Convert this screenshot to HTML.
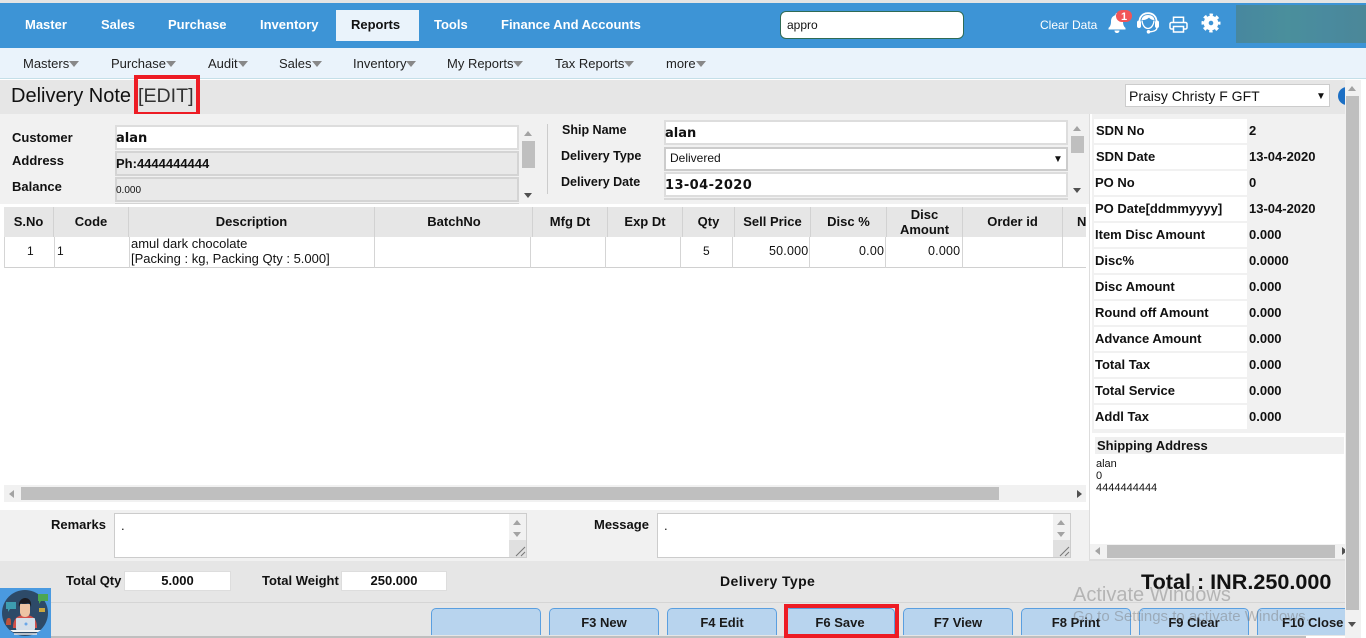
<!DOCTYPE html>
<html>
<head>
<meta charset="utf-8">
<style>
html,body{margin:0;padding:0;width:1366px;height:638px;overflow:hidden;background:#fff;font-family:"Liberation Sans",Arial,sans-serif;color:#111}
div,span{box-sizing:border-box}
.r{position:absolute}
.t{position:absolute;white-space:nowrap;line-height:16px;font-size:13px}
.b{font-weight:bold}
.c{text-align:center}
.n{color:#fff;font-weight:bold;top:17px}
.s{top:56px;color:#222}
.s i{display:inline-block;width:0;height:0;border-left:5px solid transparent;border-right:5px solid transparent;border-top:6px solid #888;margin-left:0;vertical-align:1px}
.th{position:absolute;top:207px;height:30px;background:#e6e6e6;border-right:1px solid #d2d2d2;font-weight:bold;font-size:13px;text-align:center;line-height:30px;white-space:nowrap;overflow:hidden}
.v{position:absolute;top:237px;height:31px;width:1px;background:#d5d5d5}
.lab{position:absolute;left:1094px;width:153px;height:24px;background:#fff;font-weight:bold;font-size:13px;line-height:24px;padding-left:1px;white-space:nowrap}
.val{position:absolute;left:1247px;width:97px;height:24px;background:#f1f1f1;font-weight:bold;font-size:13px;line-height:24px;padding-left:2px}
.btn{position:absolute;top:608px;width:110px;height:27px;background:#b8d4ee;border:1px solid #5a9fe0;border-bottom:0;border-radius:5px 5px 0 0;font-weight:bold;font-size:13px;text-align:center;line-height:28px;color:#1a1a1a}
.inp{position:absolute;background:#fff;border:2px solid #ddd}
.gr{position:absolute;background:#e9e9e9;border:2px solid #d4d4d4}
.up{position:absolute;width:0;height:0;border-left:4px solid transparent;border-right:4px solid transparent;border-bottom:5px solid #a3a3a3}
.dn{position:absolute;width:0;height:0;border-left:4px solid transparent;border-right:4px solid transparent;border-top:5px solid #505050}
.lf{position:absolute;width:0;height:0;border-top:4px solid transparent;border-bottom:4px solid transparent;border-right:5px solid #a3a3a3}
.rt{position:absolute;width:0;height:0;border-top:4px solid transparent;border-bottom:4px solid transparent;border-left:5px solid #505050}
.th2{background:#bfbfbf;position:absolute}
.ink{font-family:"DejaVu Sans",sans-serif;font-weight:bold;font-size:13px}
</style>
</head>
<body>
<!-- top nav -->
<div class="r" style="left:0;top:0;width:1366px;height:3px;background:#e4e4e4"></div>
<div class="r" style="left:0;top:3px;width:1366px;height:45px;background:#3d94d6"></div>
<div class="r" style="left:336px;top:10px;width:83px;height:31px;background:#eaf3fb"></div>
<span class="t n" style="left:25px">Master</span>
<span class="t n" style="left:101px">Sales</span>
<span class="t n" style="left:168px">Purchase</span>
<span class="t n" style="left:260px">Inventory</span>
<span class="t b" style="left:351px;top:17px;color:#111">Reports</span>
<span class="t n" style="left:434px">Tools</span>
<span class="t n" style="left:501px">Finance And Accounts</span>
<div class="r" style="left:780px;top:11px;width:184px;height:28px;background:#fff;border:1px solid #2f6b55;border-radius:6px"></div>
<span class="t" style="left:787px;top:17px;font-size:12px">appro</span>
<span class="t" style="left:1040px;top:17px;color:#fff;font-size:12px">Clear Data</span>
<svg class="r" style="left:1105px;top:8px" width="30" height="26" viewBox="0 0 30 26">
<path d="M12 5c-.9 0-1.500.7-1.500 1.500v.6C7.300 8 6 10.500 6 13.500c0 3.500-1 5-2.500 6.500v1.500h17V20C19 18.500 18 17 18 13.500c0-3-1.300-5.500-4.500-6.400v-.6C13.500 5.700 12.900 5 12 5zM9.500 22.500c0 1.500 1.100 2.500 2.500 2.500s2.500-1 2.500-2.500z" fill="#fff"/>
<rect x="11" y="2" width="16" height="12" rx="6" fill="#f25557"/>
<text x="19" y="12" font-size="11" font-weight="bold" fill="#fff" text-anchor="middle" font-family="Liberation Sans">1</text>
</svg>
<svg class="r" style="left:1136px;top:12px" width="24" height="23" viewBox="0 0 24 23" fill="none" stroke="#fff">
<path d="M3.500 12V9.500C3.500 4.500 7 1.200 12 1.200s8.500 3.300 8.500 8.300V12" stroke-width="1.800"/>
<path d="M5.500 8C6 4.500 8.500 3 12 3s6 1.500 6.500 5c-2 .3-4-.6-5.500-2.500C11.500 7.300 8.500 8.300 5.500 8z" fill="#fff" stroke="none"/>
<path d="M6 8.500c.3 4.500 2.800 8 6 8s5.700-3.500 6-8" stroke-width="1.300"/>
<rect x="1" y="8.500" width="4" height="7.500" rx="2" fill="#fff" stroke="none"/>
<rect x="19" y="8.500" width="4" height="7.500" rx="2" fill="#fff" stroke="none"/>
<path d="M21 15.500c0 2.800-3 4-7 4.300" stroke-width="1.300"/>
<circle cx="12.500" cy="19.800" r="1.800" fill="#fff" stroke="none"/>
</svg>
<svg class="r" style="left:1169px;top:16px" width="19" height="17" viewBox="0 0 19 17" fill="none" stroke="#fff" stroke-width="1.500">
<path d="M4.500 6.500V1.200h10v5.300"/>
<path d="M4 13H2.500A1.500 1.500 0 0 1 1 11.500V8a1.500 1.500 0 0 1 1.500-1.500h14A1.500 1.500 0 0 1 18 8v3.500a1.500 1.500 0 0 1-1.500 1.500H15"/>
<path d="M4.500 10.500h10v5.500h-10z"/>
</svg>
<svg class="r" style="left:1200px;top:12px" width="22" height="22" viewBox="0 0 22 22" fill="none" stroke="#fff">
<circle cx="11" cy="11" r="4.800" stroke-width="5"/>
<circle cx="11" cy="11" r="8.200" stroke-width="2.600" stroke-dasharray="3.400 3.040" stroke-dashoffset="1.700"/>
</svg>
<div class="r" style="left:1236px;top:5px;width:130px;height:38px;background:linear-gradient(90deg,#47879f,#4a8f9c 40%,#4a8a9e 70%,#4b8798)"></div>

<!-- sub nav -->
<div class="r" style="left:0;top:48px;width:1366px;height:30px;background:#eaf3fb"></div>
<div class="r" style="left:0;top:78px;width:1366px;height:1px;background:#c5dfe8"></div>
<span class="t s" style="left:23px">Masters<i></i></span>
<span class="t s" style="left:111px">Purchase<i></i></span>
<span class="t s" style="left:208px">Audit<i></i></span>
<span class="t s" style="left:279px">Sales<i></i></span>
<span class="t s" style="left:353px">Inventory<i></i></span>
<span class="t s" style="left:447px">My Reports<i></i></span>
<span class="t s" style="left:555px">Tax Reports<i></i></span>
<span class="t s" style="left:666px">more<i></i></span>

<!-- title bar -->
<div class="r" style="left:0;top:80px;width:1345px;height:34px;background:#e6e6e6"></div>
<span class="t" style="left:11px;top:84px;font-size:20px;line-height:24px">Delivery Note</span>
<span class="t" style="left:138px;top:84px;font-size:19.600px;line-height:24px;color:#333">[EDIT]</span>
<div class="r" style="left:134px;top:75px;width:66px;height:41px;border:4px solid #ed1c24"></div>
<div class="r" style="left:1125px;top:84px;width:205px;height:23px;background:#fff;border:1px solid #ccc"></div>
<span class="t" style="left:1129px;top:88px;font-size:14px">Praisy Christy F GFT</span>
<span class="t" style="left:1316px;top:89px;font-size:10px">&#9660;</span>
<div class="r" style="left:1338px;top:87px;width:18px;height:18px;border-radius:50%;background:#1c6fc4"></div>

<!-- customer panel -->
<div class="r" style="left:0;top:114px;width:1089px;height:90px;background:#f1f1f1"></div>
<span class="t b" style="left:12px;top:130px">Customer</span>
<span class="t b" style="left:12px;top:153px">Address</span>
<span class="t b" style="left:12px;top:179px">Balance</span>
<div class="inp" style="left:115px;top:125px;width:404px;height:25px"></div>
<span class="t ink" style="left:116px;top:131px">alan</span>
<div class="gr" style="left:115px;top:151px;width:404px;height:25px"></div>
<span class="t b" style="left:116px;top:156px">Ph:4444444444</span>
<div class="gr" style="left:115px;top:177px;width:404px;height:25px"></div>
<span class="t" style="left:116px;top:183px;font-size:10px">0.000</span>
<div class="r" style="left:115px;top:203px;width:404px;height:1px;background:#d4d4d4"></div>
<div class="up" style="left:524px;top:131px"></div>
<div class="th2" style="left:522px;top:141px;width:13px;height:27px"></div>
<div class="dn" style="left:524px;top:193px"></div>
<div class="r" style="left:547px;top:124px;width:1px;height:70px;background:#ccc"></div>
<span class="t b" style="left:562px;top:122px;font-size:12.500px">Ship Name</span>
<span class="t b" style="left:561px;top:148px;font-size:12.500px">Delivery Type</span>
<span class="t b" style="left:561px;top:174px;font-size:12.500px">Delivery Date</span>
<div class="inp" style="left:664px;top:120px;width:404px;height:25px"></div>
<span class="t ink" style="left:665px;top:126px">alan</span>
<div class="r" style="left:664px;top:147px;width:404px;height:24px;background:#fff;border:2px solid #ccc"></div>
<span class="t" style="left:670px;top:150px;font-size:12px">Delivered</span>
<span class="t" style="left:1053px;top:152px;font-size:10px">&#9660;</span>
<div class="inp" style="left:664px;top:172px;width:404px;height:25px"></div>
<span class="t ink" style="left:665px;top:178px;letter-spacing:.4px">13-04-2020</span>
<div class="r" style="left:664px;top:198px;width:404px;height:2px;background:#d8d8d8"></div>
<div class="up" style="left:1073px;top:126px"></div>
<div class="th2" style="left:1071px;top:136px;width:13px;height:17px"></div>
<div class="dn" style="left:1073px;top:188px"></div>

<!-- table -->
<div class="th" style="left:4px;width:50px">S.No</div>
<div class="th" style="left:54px;width:75px;font-weight:bold">Code</div>
<div class="th" style="left:129px;width:246px">Description</div>
<div class="th" style="left:375px;width:158px;padding-left:1px">BatchNo</div>
<div class="th" style="left:533px;width:75px">Mfg Dt</div>
<div class="th" style="left:608px;width:75px">Exp Dt</div>
<div class="th" style="left:683px;width:52px">Qty</div>
<div class="th" style="left:735px;width:76px">Sell Price</div>
<div class="th" style="left:811px;width:76px">Disc %</div>
<div class="th" style="left:887px;width:76px;line-height:15px">Disc<br>Amount</div>
<div class="th" style="left:963px;width:100px">Order id</div>
<div class="th" style="left:1063px;width:23px;border-right:0;text-align:left;padding-left:14px">N</div>
<div class="r" style="left:4px;top:267px;width:1082px;height:1px;background:#d0d0d0"></div>
<div class="v" style="left:4px"></div><div class="v" style="left:54px"></div><div class="v" style="left:129px"></div>
<div class="v" style="left:374px"></div><div class="v" style="left:530px"></div><div class="v" style="left:605px"></div>
<div class="v" style="left:680px"></div><div class="v" style="left:732px"></div><div class="v" style="left:809px"></div>
<div class="v" style="left:885px"></div><div class="v" style="left:962px"></div><div class="v" style="left:1062px"></div>
<span class="t" style="left:27px;top:243px;font-size:12px">1</span>
<span class="t" style="left:57px;top:243px;font-size:12px">1</span>
<span class="t" style="left:131px;top:236px;font-size:13px">amul dark chocolate</span>
<span class="t" style="left:131px;top:251px;font-size:13px">[Packing : kg, Packing Qty : 5.000]</span>
<span class="t" style="left:703px;top:243px;font-size:12px">5</span>
<span class="t" style="left:769px;top:243px;letter-spacing:.2px;font-size:12.500px">50.000</span>
<span class="t" style="left:859px;top:243px;letter-spacing:.2px;font-size:12.500px">0.00</span>
<span class="t" style="left:928px;top:243px;letter-spacing:.2px;font-size:12.500px">0.000</span>

<!-- table hscroll -->
<div class="r" style="left:4px;top:485px;width:1082px;height:17px;background:#f1f1f1"></div>
<div class="th2" style="left:21px;top:487px;width:978px;height:13px"></div>
<div class="lf" style="left:9px;top:490px"></div>
<div class="rt" style="left:1077px;top:490px"></div>

<!-- remarks -->
<div class="r" style="left:0;top:510px;width:1089px;height:51px;background:#f1f1f1"></div>
<span class="t b" style="left:51px;top:517px">Remarks</span>
<span class="t b" style="left:594px;top:517px">Message</span>
<div class="r" style="left:114px;top:513px;width:413px;height:45px;background:#fff;border:1px solid #ccc"></div>
<div class="r" style="left:657px;top:513px;width:414px;height:45px;background:#fff;border:1px solid #ccc"></div>
<span class="t" style="left:121px;top:518px">.</span>
<span class="t" style="left:664px;top:518px">.</span>
<div class="r" style="left:509px;top:514px;width:17px;height:43px;background:#f1f1f1"></div>
<div class="r" style="left:509px;top:540px;width:17px;height:17px;background:#e0e0e0"></div>
<div class="up" style="left:513px;top:520px"></div>
<div class="dn" style="left:513px;top:532px;border-top-color:#a3a3a3"></div>
<div class="r" style="left:1053px;top:514px;width:17px;height:43px;background:#f1f1f1"></div>
<div class="r" style="left:1053px;top:540px;width:17px;height:17px;background:#e0e0e0"></div>
<div class="up" style="left:1057px;top:520px"></div>
<div class="dn" style="left:1057px;top:532px;border-top-color:#a3a3a3"></div>
<svg class="r" style="left:515px;top:546px" width="11" height="11" stroke="#777" stroke-width="1"><path d="M1 10 10 1M6 10 10 6"/></svg>
<svg class="r" style="left:1059px;top:546px" width="11" height="11" stroke="#777" stroke-width="1"><path d="M1 10 10 1M6 10 10 6"/></svg>

<!-- right panel -->
<div class="r" style="left:1089px;top:114px;width:256px;height:447px;background:#fff;border-left:1px solid #ddd;border-bottom:2px solid #ddd"></div>
<div class="r" style="left:1092px;top:114px;width:253px;height:319px;background:#f1f1f1"></div>
<div class="lab" style="top:119px;padding-left:2px">SDN No</div><div class="val" style="top:119px">2</div>
<div class="lab" style="top:145px;padding-left:2px">SDN Date</div><div class="val" style="top:145px">13-04-2020</div>
<div class="lab" style="top:171px">PO No</div><div class="val" style="top:171px">0</div>
<div class="lab" style="top:197px">PO Date[ddmmyyyy]</div><div class="val" style="top:197px">13-04-2020</div>
<div class="lab" style="top:223px">Item Disc Amount</div><div class="val" style="top:223px">0.000</div>
<div class="lab" style="top:249px">Disc%</div><div class="val" style="top:249px">0.0000</div>
<div class="lab" style="top:275px">Disc Amount</div><div class="val" style="top:275px">0.000</div>
<div class="lab" style="top:301px">Round off Amount</div><div class="val" style="top:301px">0.000</div>
<div class="lab" style="top:327px">Advance Amount</div><div class="val" style="top:327px">0.000</div>
<div class="lab" style="top:353px">Total Tax</div><div class="val" style="top:353px">0.000</div>
<div class="lab" style="top:379px">Total Service</div><div class="val" style="top:379px">0.000</div>
<div class="lab" style="top:405px">Addl Tax</div><div class="val" style="top:405px">0.000</div>
<div class="r" style="left:1095px;top:437px;width:249px;height:17px;background:#efefef"></div>
<span class="t b" style="left:1097px;top:438px">Shipping Address</span>
<span class="t" style="left:1096px;top:458px;font-size:11px;line-height:12px">alan<br>0<br>4444444444</span>
<div class="r" style="left:1090px;top:544px;width:255px;height:15px;background:#f1f1f1"></div>
<div class="th2" style="left:1107px;top:545px;width:228px;height:13px"></div>
<div class="lf" style="left:1095px;top:547px"></div>
<div class="rt" style="left:1342px;top:547px"></div>

<!-- totals -->
<div class="r" style="left:0;top:561px;width:1345px;height:75px;background:#e6e6e6"></div>
<div class="r" style="left:0;top:602px;width:1345px;height:1px;background:#d5d5d5"></div>
<span class="t b" style="left:66px;top:573px">Total Qty</span>
<div class="r c" style="left:124px;top:571px;width:107px;height:20px;background:#fff;border:1px solid #ddd;font-size:13px;font-weight:bold;line-height:18px">5.000</div>
<span class="t b" style="left:262px;top:573px">Total Weight</span>
<div class="r c" style="left:341px;top:571px;width:106px;height:20px;background:#fff;border:1px solid #ddd;font-size:13px;font-weight:bold;line-height:18px">250.000</div>
<span class="t b" style="left:720px;top:573px;font-size:14px;letter-spacing:.4px">Delivery Type</span>
<span class="t b" style="left:1141px;top:570px;font-size:21.600px;line-height:24px">Total : INR.250.000</span>

<!-- buttons -->
<div class="btn" style="left:431px"></div>
<div class="btn" style="left:549px">F3 New</div>
<div class="btn" style="left:667px">F4 Edit</div>
<div class="btn" style="left:785px">F6 Save</div>
<div class="btn" style="left:903px">F7 View</div>
<div class="btn" style="left:1021px">F8 Print</div>
<div class="btn" style="left:1139px">F9 Clear</div>
<div class="btn" style="left:1257px;width:88px;overflow:hidden;border-right:0;border-radius:5px 0 0 0;text-align:left;padding-left:24px;white-space:nowrap">F10 Close</div>
<div class="r" style="left:784px;top:604px;width:115px;height:34px;border:4px solid #ed1c24"></div>
<div class="th2" style="left:51px;top:636px;width:733px;height:2px"></div>
<div class="th2" style="left:899px;top:636px;width:407px;height:2px"></div>

<!-- watermark -->
<span class="t" style="left:1073px;top:584px;font-size:20px;line-height:22px;color:rgba(120,120,120,.45)">Activate Windows</span>
<span class="t" style="left:1073px;top:609px;font-size:15px;color:rgba(120,120,120,.45)">Go to Settings to activate Windows.</span>

<!-- main scrollbar -->
<div class="r" style="left:1345px;top:80px;width:16px;height:558px;background:#f1f1f1"></div>
<div class="th2" style="left:1346px;top:96px;width:13px;height:514px"></div>
<div class="up" style="left:1348px;top:86px"></div>
<div class="dn" style="left:1348px;top:622px"></div>

<!-- avatar -->
<svg class="r" style="left:0;top:588px" width="51" height="50" viewBox="0 0 51 50">
<rect width="51" height="50" fill="#4a9ae0"/>
<circle cx="25" cy="25" r="23" fill="#2d4a68"/>
<path d="M6 14h10v7h-6l-2 3v-3H6z" fill="#3d9cb0"/>
<path d="M38 6h10v7h-7l-2 3v-3h-1z" fill="#4ca650"/>
<path d="M39 20h6v4h-6z" fill="#c9a640"/>
<path d="M6 37c0-6 1-7 3-7s2 2 2 7z" fill="#c0523c"/>
<path d="M13 40c0-9 4-13 12-13s12 4 12 13z" fill="#d2504a"/>
<path d="M20 16h10v8c0 3-2 5-5 5s-5-2-5-5z" fill="#eec4a4"/>
<path d="M19 19c-1-6 3-9 6-9s7 2 6 9c-1-3-2-4-3-4-3 1-6 1-7 0-1 1-1 2-2 4z" fill="#1c1c22"/>
<rect x="16" y="30" width="19" height="12" rx="1" fill="#d5dfe9"/>
<circle cx="26" cy="36" r="1.500" fill="#6aa7e8"/>
<path d="M10 42h31l-3 2H13z" fill="#f2f2f2"/>
<path d="M14 46h23" stroke="#e8e8e8" stroke-width="1.500"/>
</svg>
</body>
</html>
